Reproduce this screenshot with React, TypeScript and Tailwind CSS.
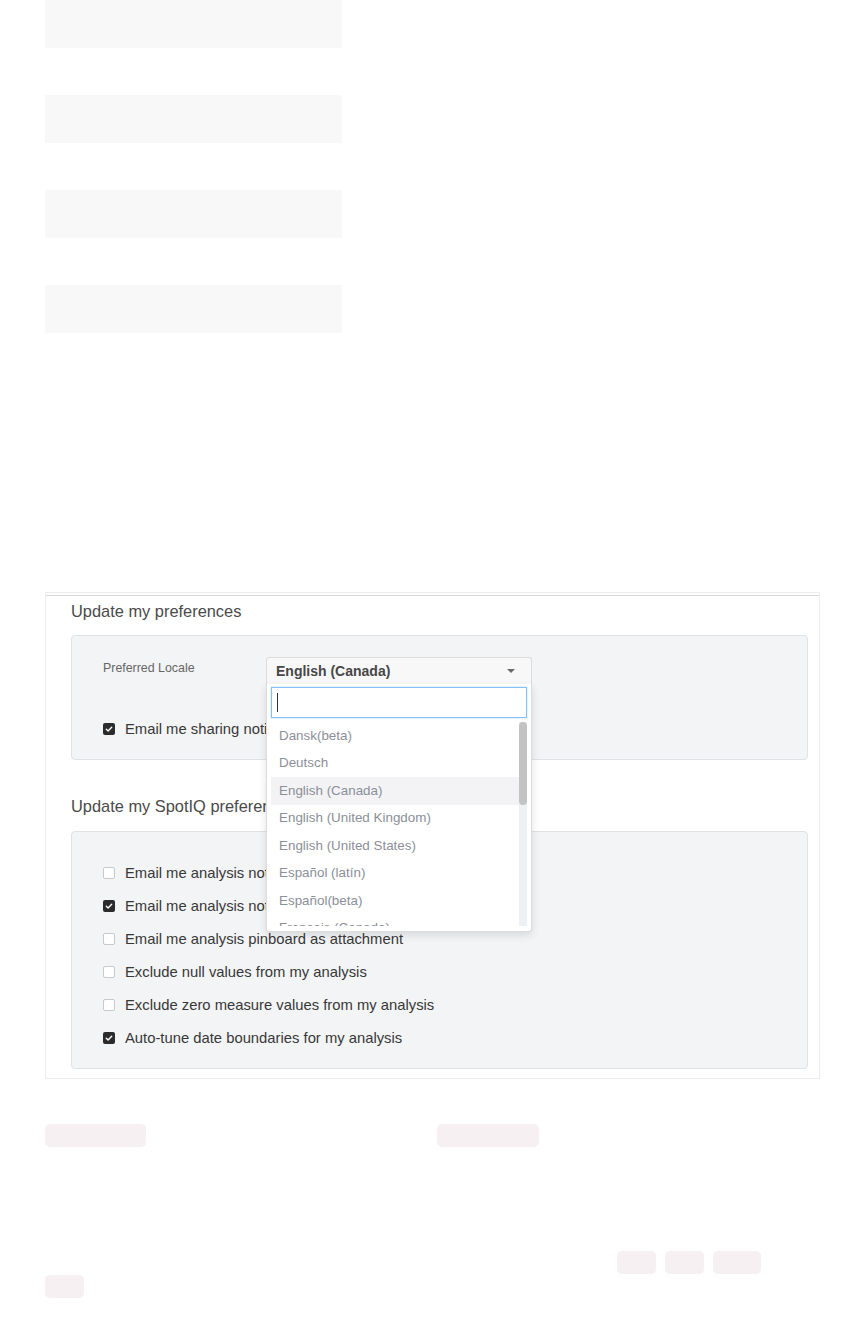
import { useState } from 'react'

type Pref = { label: string; checked: boolean }

const locales = [
  'Dansk(beta)',
  'Deutsch',
  'English (Canada)',
  'English (United Kingdom)',
  'English (United States)',
  'Español (latín)',
  'Español(beta)',
  'Français (Canada)',
  'Français (France)',
]

const spotiqPrefs: Pref[] = [
  { label: 'Email me analysis notifications for my pinboards', checked: false },
  { label: 'Email me analysis notifications for my answers', checked: true },
  { label: 'Email me analysis pinboard as attachment', checked: false },
  { label: 'Exclude null values from my analysis', checked: false },
  { label: 'Exclude zero measure values from my analysis', checked: false },
  { label: 'Auto-tune date boundaries for my analysis', checked: true },
]

const Checkbox = ({ checked }: { checked: boolean }) =>
  checked ? (
    <span className="flex h-[12px] w-[12px] shrink-0 items-center justify-center rounded-[2px] bg-[#2b2b2b]">
      <svg width="8" height="8" viewBox="0 0 8 8" fill="none">
        <path d="M1.3 4.2 3.1 5.9 6.7 2.2" stroke="#fff" strokeWidth="1.4" strokeLinecap="round" strokeLinejoin="round" />
      </svg>
    </span>
  ) : (
    <span className="h-[12px] w-[12px] shrink-0 rounded-[2px] border border-[#c9c9c9] bg-white" />
  )

const CheckRow = ({ label, checked }: Pref) => (
  <div className="flex h-[20px] items-center gap-[10px] whitespace-nowrap text-[14.8px] text-[#383838]">
    <Checkbox checked={checked} />
    <span>{label}</span>
  </div>
)

const LocaleSelect = () => {
  const [selected] = useState('English (Canada)')

  return (
    <div className="relative w-[266px]">
      <div className="flex h-[27px] items-center justify-between rounded-t-[3px] border border-b-0 border-[#dcdcdc] bg-[#f8f8f8] pr-[16px] pl-[9px]">
        <span className="text-[14px] font-semibold text-[#474747]">{selected}</span>
        <span className="h-0 w-0 border-t-[4px] border-r-[4.5px] border-l-[4.5px] border-t-[#6b6b6b] border-r-transparent border-l-transparent" />
      </div>

      <div className="absolute top-full left-0 z-10 w-[266px] rounded-b-[3px] border border-t-0 border-[#dcdcdc] bg-white px-[4px] pt-[3px] pb-[5px] shadow-[0_3px_8px_rgba(0,0,0,0.12)]">
        <div className="flex h-[31px] items-center border border-[#86bff3] bg-white px-[5px] shadow-[0_0_2px_rgba(60,150,240,0.35)]">
          <span className="h-[19px] w-px bg-[#333]" />
        </div>
        <div className="relative mt-[4px] h-[204px] overflow-hidden">
          <div className="pr-[8px]">
            {locales.map((l) => (
              <div
                key={l}
                className={`flex h-[27.5px] items-center pl-[8px] text-[13.4px] whitespace-nowrap text-[#8b8f99] ${
                  l === selected ? 'bg-[#f3f3f5]' : ''
                }`}
              >
                {l}
              </div>
            ))}
          </div>
          <div className="absolute top-0 right-0 bottom-0 w-[8px] bg-[#eef0f3]">
            <div className="h-[83px] w-[8px] rounded-full bg-[#c3c3c3]" />
          </div>
        </div>
      </div>
    </div>
  )
}

export default function App() {
  return (
    <div className="min-h-[1344px] bg-white font-['Liberation_Sans',Arial,sans-serif]">
      <div className="pl-[45px]">
        <div className="flex w-[297px] flex-col gap-[47px]">
          <div className="h-[48px] bg-[#f8f8f8]" />
          <div className="h-[48px] bg-[#f8f8f8]" />
          <div className="h-[48px] bg-[#f8f8f8]" />
          <div className="h-[48px] bg-[#f8f8f8]" />
        </div>

        <div className="mt-[259px] w-[775px] border border-[#ececec] bg-white">
          <div className="mt-[2px] border-t border-[#d9d9d9] pt-[5px] pr-[11px] pb-[9px] pl-[25px]">
            <h2 className="text-[16.4px] leading-[20px] text-[#4a4a4a]">Update my preferences</h2>

            <div className="mt-[14px] rounded-[4px] border border-[#e0e2e5] bg-[#f3f4f6] pt-[21px] pb-[20px] pl-[31px]">
              <div className="flex items-start">
                <div className="mt-[3px] w-[163px] text-[12.4px] leading-[16px] text-[#666]">Preferred Locale</div>
                <LocaleSelect />
              </div>
              <div className="mt-[35px]">
                <CheckRow label="Email me sharing notifications" checked />
              </div>
            </div>

            <h2 className="mt-[36px] text-[16.4px] leading-[20px] text-[#4a4a4a]">Update my SpotIQ preferences</h2>

            <div className="mt-[15px] flex flex-col gap-[13px] rounded-[4px] border border-[#e0e2e5] bg-[#f3f4f6] pt-[31px] pb-[20px] pl-[31px]">
              {spotiqPrefs.map((p) => (
                <CheckRow key={p.label} label={p.label} checked={p.checked} />
              ))}
            </div>
          </div>
        </div>

        <div className="mt-[45px] grid w-[775px] grid-cols-[392px_1fr]">
          <div className="h-[23px] w-[101px] rounded-[5px] bg-[#f7f0f2]" />
          <div className="h-[23px] w-[102px] rounded-[5px] bg-[#f7f0f2]" />
        </div>

        <div className="mt-[104px] flex w-[775px] justify-end gap-[9px] pr-[59px]">
          <div className="h-[23px] w-[39px] rounded-[5px] bg-[#f7f0f2]" />
          <div className="h-[23px] w-[39px] rounded-[5px] bg-[#f7f0f2]" />
          <div className="h-[23px] w-[48px] rounded-[5px] bg-[#f7f0f2]" />
        </div>
        <div className="mt-[1px] h-[23px] w-[39px] rounded-[5px] bg-[#f7f0f2]" />
      </div>
    </div>
  )
}
